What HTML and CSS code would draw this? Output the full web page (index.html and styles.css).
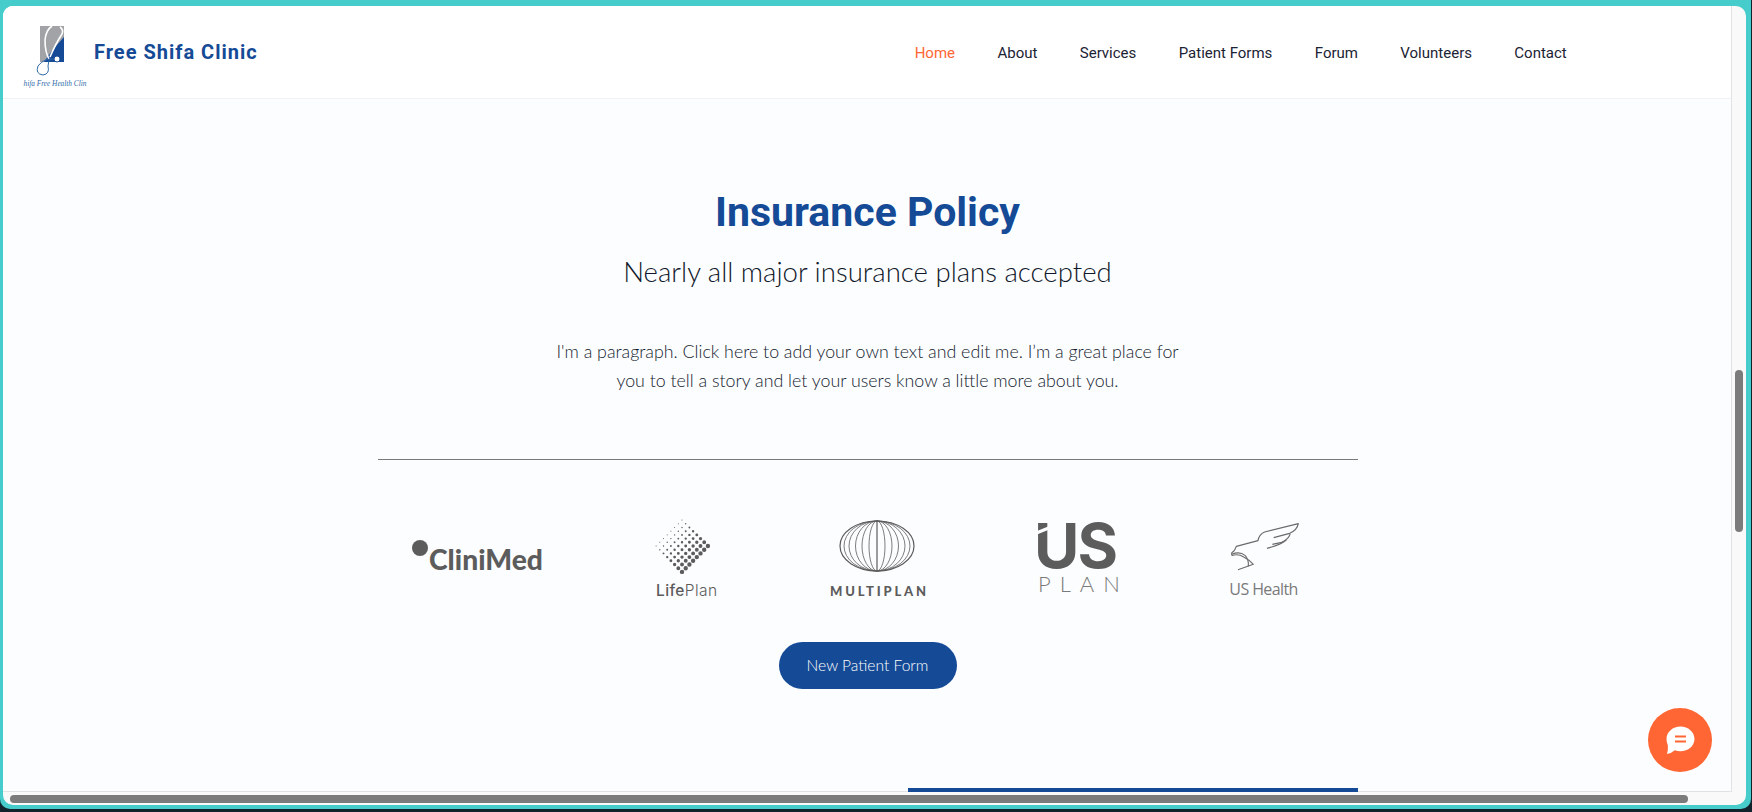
FILE: index.html
```html
<!DOCTYPE html>
<html lang="en">
<head>
<meta charset="utf-8"/>
<meta content="width=device-width, initial-scale=1.0" name="viewport"/>
<title>Insurance Policy - Free Shifa Clinic</title>
<link rel="stylesheet" href="styles.css">
</head>
<body>
<div class="frame">
  <div class="window">
    <div class="top-row">
      <div class="page">
        <header class="site-header">
          <a class="brand" href="#">
            <svg class="brand-logo" viewBox="22 26 66 62" width="66" height="62">
              <rect x="40" y="26" width="24" height="36" fill="#a2a3a6"/>
              <path d="M64 37 L64 62 L44 62 Q52 50 64 37 Z" fill="#144a96"/>
              <path d="M52 26 Q46 30 45 40 Q45 52 49 59 M60 27 Q64 30 62 34 Q56 43 50 57" fill="none" stroke="#fff" stroke-width="1.6"/>
              <circle cx="57" cy="59" r="3" fill="#fff" stroke="#144a96"/>
              <path d="M54 59 Q44 58 38 66 Q35 74 43 75 Q50 74 48 66 Q48 61 51 59" fill="none" stroke="#2f6aa8" stroke-width="1"/>
              <text class="brand-script" x="55" y="86" text-anchor="middle">hifa Free Health Clin</text>
            </svg>
            <span class="brand-name">Free Shifa Clinic</span>
          </a>
          <nav class="main-nav">
            <a class="active" href="#">Home</a>
            <a href="#">About</a>
            <a href="#">Services</a>
            <a href="#">Patient Forms</a>
            <a href="#">Forum</a>
            <a href="#">Volunteers</a>
            <a href="#">Contact</a>
          </nav>
        </header>

        <section class="policy">
          <h1>Insurance Policy</h1>
          <h2>Nearly all major insurance plans accepted</h2>
          <p>I'm a paragraph. Click here to add your own text and edit me. I’m a great place for<br>you to tell a story and let your users know a little more about you.</p>
          <hr>
          <div class="logos">
            <svg viewBox="413 515 130 90" width="130" height="90">
              <circle cx="421" cy="548" r="8" fill="#5c5c5c"/>
              <text class="logo-clinimed" x="430" y="570" textLength="114" lengthAdjust="spacingAndGlyphs">CliniMed</text>
            </svg>

            <svg viewBox="653 515 64 90" width="64" height="90">
              <g transform="translate(653 518)" fill="none" stroke="#5c5c5c" stroke-linecap="round" stroke-dasharray="0 5.23">
                <path d="M28 2.1 L2.1 28" stroke-width="1"/>
                <path d="M31.7 5.8 L5.8 31.7" stroke-width="1.4"/>
                <path d="M35.4 9.5 L9.5 35.4" stroke-width="1.9"/>
                <path d="M39.1 13.2 L13.2 39.1" stroke-width="2.4"/>
                <path d="M42.8 16.9 L16.9 42.8" stroke-width="2.9"/>
                <path d="M46.5 20.6 L20.6 46.5" stroke-width="3.4"/>
                <path d="M50.2 24.3 L24.3 50.2" stroke-width="3.9"/>
                <path d="M53.9 28 L28 53.9" stroke-width="4.4"/>
              </g>
              <text class="logo-lifeplan" x="655" y="596" textLength="61">Life<tspan class="thin">Plan</tspan></text>
            </svg>

            <svg viewBox="829 515 97 90" width="97" height="90">
              <g fill="none" stroke="#5c5c5c" stroke-width="0.8">
                <ellipse cx="876" cy="546" rx="37" ry="25" stroke-width="1.2"/>
                <ellipse cx="876" cy="546" rx="33" ry="25"/>
                <ellipse cx="876" cy="546" rx="28" ry="25"/>
                <ellipse cx="876" cy="546" rx="21.500" ry="25"/>
                <ellipse cx="876" cy="546" rx="15" ry="25"/>
                <ellipse cx="876" cy="546" rx="8" ry="25"/>
                <path d="M876 521 L876 571" stroke-width="1.2"/>
              </g>
              <text class="logo-multiplan" x="829" y="596" textLength="96">MULTIPLAN</text>
            </svg>

            <svg viewBox="1037 515 80 90" width="80" height="90">
              <text class="logo-us" x="1032" y="568">US</text>
              <path d="M1035 531 L1051 524.500 L1051 528 L1035 534.500 Z" fill="#fcfdff"/>
              <text class="logo-usplan" x="1036" y="592">PLAN</text>
            </svg>

            <svg viewBox="117 45 213 270" width="71" height="90">
              <g transform="translate(-7 3)" fill="none" stroke="#6a6a6a" stroke-width="3.4" stroke-linejoin="round">
                <path d="M125 157 L127 163 Q148 158 162 168 Q178 176 191 190 L145 206"/>
                <path d="M125 157 Q136 150 140 136 L205 119 Q208 100 225 93 L326 68 Q322 88 300 97 L252 110"/>
                <path d="M302 98 Q296 116 276 124 L248 130"/>
                <path d="M290 117 Q272 132 232 142"/>
                <path d="M126 160 Q150 150 166 163 Q178 175 176 196"/>
              </g>
              <text class="logo-ushealth" x="112" y="285" textLength="207">US Health</text>
            </svg>
          </div>
          <a class="cta" href="#">New Patient Form</a>
          <div class="accent-bar"></div>
        </section>
      </div>
      <div class="vscroll"><div class="vthumb"></div></div>
    </div>
    <div class="hscroll"><div class="hthumb"></div></div>
  </div>

  <a class="chat-btn" href="#" aria-label="Chat">
    <svg viewBox="0 0 32 32" width="32" height="32">
      <path d="M16.500 2.500 C24.200 2.500 30.500 8 30.500 15 C30.500 22 24.200 27.200 16.500 27.200 C14.500 27.200 12.500 26.900 10.800 26.200 Q7 29.500 3 30 Q4.200 26 3.900 21.500 Q2.500 18.500 2.500 15 C2.500 8 8.800 2.500 16.500 2.500 Z" fill="#fff"/>
      <path d="M11 12.500 H22 M11 17.500 H22" stroke="#ff6633" stroke-width="2.200"/>
    </svg>
  </a>
</div>
</body>
</html>
```

FILE: styles.css
```css
* {
  box-sizing: border-box;
}
html, body {
  height: 100%;
}
body {
  margin: 0;
  background-color: #10232c;
  overflow: hidden;
  font-family: 'Lato', sans-serif;
}
.frame {
  position: relative;
  width: 1751px;
  height: 809px;
  padding: 6px 5px 4px 3px;
  background-color: #45cccb;
  border-radius: 0 0 10px 10px;
}
.window {
  display: flex;
  flex-direction: column;
  height: 100%;
  background-color: #f9f9f9;
  border-radius: 10px;
  overflow: hidden;
}
.top-row {
  display: flex;
  flex: 1;
  min-height: 0;
}
.page {
  flex: 1;
  min-width: 0;
  background-color: #fcfdff;
  border-right: 1px solid #e2e2e2;
  border-bottom: 1px solid #e2e2e2;
}

/* scrollbars */
.vscroll {
  width: 14px;
  padding: 364px 3px 0 3px;
}
.vthumb {
  width: 8px;
  height: 162px;
  background: #7b7b7b;
  border-radius: 4px;
}
.hscroll {
  height: 13px;
  padding: 3px 0 0 7px;
}
.hthumb {
  width: 1678px;
  height: 8px;
  background: #7b7b7b;
  border-radius: 4px;
}

/* header */
.site-header {
  display: flex;
  align-items: flex-start;
  height: 93px;
  background-color: #fff;
  border-bottom: 1px solid #f0f1f3;
}
.brand {
  display: flex;
  align-items: flex-start;
  margin: 20px 0 0 19px;
  color: #144a96;
  text-decoration: none;
}
.brand-logo {
  flex: none;
  overflow: visible;
}
.brand-script {
  font-family: 'Liberation Serif', serif;
  font-style: italic;
  font-size: 7.3px;
  fill: #2f6aa8;
}
.brand-name {
  margin: 14px 0 0 6px;
  font-family: 'Roboto', sans-serif;
  font-weight: 700;
  font-size: 20px;
  line-height: 24px;
  letter-spacing: 1px;
}
.main-nav {
  display: flex;
  gap: 42.4px;
  margin: 38px 0 0 657px;
}
.main-nav a {
  font-family: 'Roboto', sans-serif;
  font-size: 15px;
  line-height: 18px;
  color: #1b2334;
  text-decoration: none;
}
.main-nav a.active {
  color: #ff6633;
}

/* main section */
.policy {
  display: flex;
  flex-direction: column;
  align-items: center;
  padding: 90px 0 0 1px;
}
.policy h1 {
  margin: 0;
  font-family: 'Roboto', sans-serif;
  font-weight: 700;
  font-size: 41px;
  line-height: 46px;
  color: #144a96;
}
.policy h2 {
  margin: 17px 0 0;
  font-weight: 300;
  font-size: 27.6px;
  line-height: 40px;
  color: #10182a;
}
.policy p {
  margin: 45px 0 0;
  font-weight: 300;
  font-size: 17.8px;
  line-height: 29px;
  text-align: center;
  color: #141c2e;
}
.policy hr {
  width: 980px;
  height: 1px;
  margin: 64px 0 0;
  border: none;
  background-color: #77797d;
}
.logos {
  display: flex;
  gap: 112px;
  width: 980px;
  margin-top: 55px;
  padding-left: 34px;
}
.logos svg {
  flex: none;
  overflow: visible;
}
.logos text {
  fill: #5c5c5c;
}
.logo-clinimed {
  font-family: 'Lato', sans-serif;
  font-weight: 900;
  font-size: 28px;
}
.logo-lifeplan {
  font-family: 'Inter', sans-serif;
  font-weight: 500;
  font-size: 15.5px;
}
.logo-lifeplan .thin {
  font-weight: 300;
}
.logo-multiplan {
  font-family: 'Lato', sans-serif;
  font-weight: 900;
  font-size: 13px;
}
.logo-us {
  font-family: 'Inter', sans-serif;
  font-weight: 700;
  font-size: 62px;
  letter-spacing: -2px;
}
.logos .logo-usplan {
  font-family: 'Lato', sans-serif;
  font-weight: 300;
  font-size: 22px;
  letter-spacing: 9px;
  fill: #7a7a7a;
}
.logos .logo-ushealth {
  font-family: 'Open Sans', sans-serif;
  font-size: 48px;
  fill: #7a7a7a;
}
.cta {
  display: flex;
  align-items: center;
  justify-content: center;
  width: 178px;
  height: 47px;
  margin-top: 37px;
  padding-bottom: 2px;
  font-weight: 300;
  font-size: 15.6px;
  color: #fff;
  text-decoration: none;
  background-color: #144a96;
  border-radius: 24px;
}
.accent-bar {
  align-self: flex-start;
  width: 450px;
  height: 4px;
  margin: 99px 0 0 904px;
  background-color: #144a96;
}

/* chat bubble */
.chat-btn {
  position: absolute;
  left: 1648px;
  top: 708px;
  display: flex;
  align-items: center;
  justify-content: center;
  width: 64px;
  height: 64px;
  background-color: #ff6633;
  border-radius: 50%;
}
```
